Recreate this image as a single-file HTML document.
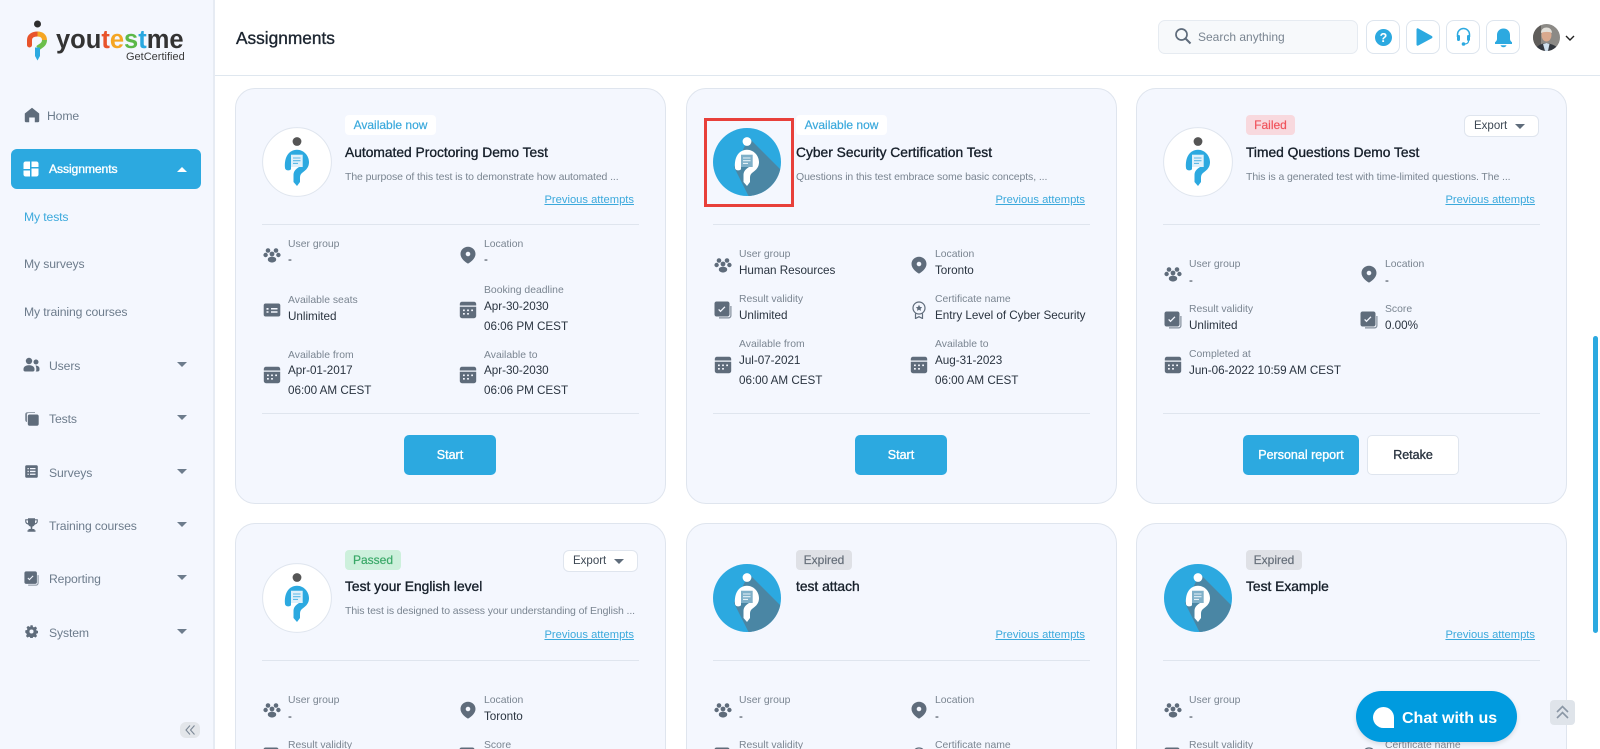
<!DOCTYPE html>
<html lang="en"><head><meta charset="utf-8"><title>Assignments</title>
<style>
*{box-sizing:border-box}
html,body{margin:0;padding:0;width:1600px;height:749px;overflow:hidden;background:#fff;font-family:"Liberation Sans",sans-serif}
#wrap{position:relative;width:1600px;height:749px;overflow:hidden;background:#fff}
#side{position:absolute;left:0;top:0;width:215px;height:749px;background:#f4f7fe;border-right:2px solid #e6ebf3}
#side .t{position:absolute;left:49px;font-size:12.2px;letter-spacing:-.12px;line-height:16px;color:#6d7c8c;white-space:nowrap}
#side svg.i{position:absolute;fill:#5f6c7b}
.car{position:absolute;left:177px;width:0;height:0;border-left:5px solid transparent;border-right:5px solid transparent;border-top:5px solid #6d7c8c}
#act{position:absolute;left:11px;top:149px;width:190px;height:40px;background:#2ca9e0;border-radius:6px}
#hdr{position:absolute;left:215px;top:0;width:1385px;height:76px;background:#fff;border-bottom:1.5px solid #dfe7ef}
.card{position:absolute;width:431px;height:416px;background:#f4f7fe;border:1.5px solid #dfe5ee;border-radius:20px}
.card.r2{height:226px;overflow:hidden;border-bottom:0;border-radius:20px 20px 0 0}
.card>*{position:absolute;white-space:nowrap}
.av{left:26px;top:38px;width:70px;height:70px}
.r2 .av{top:39px}
.bd{left:109px;top:26px;height:20px;line-height:20px;text-align:center;font-size:12px;border-radius:4px;-webkit-text-stroke:.2px}
.now{width:91px;background:#fff;color:#3ba9dc}
.fail{width:49px;background:#f8d9de;color:#f0545c}
.pass{width:56px;background:#cdf0dc;color:#3aa868}
.exp{width:56px;background:#dfe1e6;color:#666f7a}
.ti{left:109px;top:56px;font-size:13.8px;line-height:16px;color:#17202b;-webkit-text-stroke:.35px #17202b}
.r2 .ti{top:55px}
.de{left:109px;top:80px;font-size:10.5px;letter-spacing:-.1px;line-height:16px;color:#7a8591}
.r2 .de{top:79px}
.pa{right:31px;top:103px;font-size:11.2px;line-height:16px;color:#3ba9dc;text-decoration:underline}
.dv{left:26px;width:377px;height:1px;background:#dfe5ee}
.l{font-size:10.4px;line-height:16px;color:#7a8591;margin-top:2px}
.v{font-size:11.7px;letter-spacing:-.03px;line-height:16px;color:#2a3440;margin-top:1px}
.ex{left:327px;top:26px;width:75px;height:22px;background:#fff;border:1px solid #dfe5ee;border-radius:6px;font-size:11.5px;line-height:20px;color:#3d4854;padding-left:9px}
.ex:after{content:"";position:absolute;left:50px;top:8px;border-left:5px solid transparent;border-right:5px solid transparent;border-top:5px solid #5f6c7b}
.btn{top:346px;height:40px;border-radius:5px;background:#2ca9e0;color:#fff;font-size:12.5px;-webkit-text-stroke:.35px #fff;line-height:40px;text-align:center}
.btn.w{background:#fff;color:#2a3440;-webkit-text-stroke:.35px #2a3440;border:1px solid #dfe5ee;line-height:38px}
.ic{width:18px;height:18px;fill:#5f6c7b;margin-top:1px}
.hb{position:absolute;top:20px;width:34px;height:34px;border:1px solid #dde5ee;border-radius:8px;background:#fff}
.hb svg{position:absolute;left:0;top:0;width:32px;height:32px;fill:#2ca9e0}
</style></head><body>
<div id="wrap">
<svg width="0" height="0" style="position:absolute">
<defs>
<clipPath id="cc"><circle cx="35" cy="35" r="34"/></clipPath>
<symbol id="fig-w" viewBox="0 0 70 70">
<circle cx="35" cy="35" r="34.4" fill="#fff" stroke="#dfe5ee" stroke-width="1"/>
<circle cx="35" cy="14.5" r="4.4" fill="#555"/>
<path d="M23 41C22 30 27 22.700 35 22.700C42 22.700 47 29 47 35C47 42 42 44 39.500 46.500C38.300 47.700 38 49 38 52V55L35 59L31.500 55V48C31.500 44 34 42 37 40L40 38V28H29V42C28.500 44 23.500 44 23 41Z" fill="#2ca9e0"/>
<path d="M29 27.700h11.700V40H29z" fill="#dff0fa"/>
<path d="M31 31h7.500M31 33.700h7.500M31 36.400h5" stroke="#5cb9e6" stroke-width="1.100"/>
</symbol>
<symbol id="fig-b" viewBox="0 0 70 70">
<circle cx="35" cy="35" r="34" fill="#2ca9e0"/>
<path d="M37 11L80 54V80H42L22 40z" fill="#4a86a4" clip-path="url(#cc)"/>
<circle cx="35" cy="14.500" r="4.400" fill="#fff"/>
<path d="M23 41C22 30 27 22.700 35 22.700C42 22.700 47 29 47 35C47 42 42 44 39.500 46.500C38.300 47.700 38 49 38 52V55L35 59L31.500 55V48C31.500 44 34 42 37 40L40 38V28H29V42C28.500 44 23.500 44 23 41Z" fill="#fff"/>
<path d="M29 27.700h11.700V40H29z" fill="#7fb0c9"/>
<path d="M31 31h7.500M31 33.700h7.500M31 36.400h5" stroke="#e4f1f8" stroke-width="1.100"/>
</symbol>
<symbol id="grp" viewBox="0 0 18 18"><circle cx="5" cy="4.500" r="2.300"/><circle cx="13" cy="4.500" r="2.300"/><circle cx="2.600" cy="9" r="2.200"/><circle cx="15.400" cy="9" r="2.200"/><circle cx="9" cy="8" r="2.400"/><path d="M4.800 13.500C4.800 11.500 7 10.800 9 10.800s4.200.7 4.200 2.700c0 1.800-2 3-4.200 3s-4.200-1.200-4.200-3z"/></symbol>
<symbol id="pin" viewBox="0 0 18 18"><path fill-rule="evenodd" d="M9 .8C4.800.8 1.500 4 1.500 8c0 4.800 5.500 8.600 7.500 9.600 2-1 7.500-4.800 7.500-9.600C16.500 4 13.200.8 9 .8zM9 5.700a2.300 2.300 0 1 1 0 4.600 2.300 2.300 0 0 1 0-4.600z"/></symbol>
<symbol id="cal" viewBox="0 0 18 18"><path fill-rule="evenodd" d="M3 .8h12c1.200 0 2.200 1 2.200 2.200v1.500H.8V3C.8 1.800 1.800.8 3 .8zM.8 5.800h16.400V15c0 1.200-1 2.200-2.200 2.200H3C1.800 17.200.8 16.200.8 15zM4 8.500v1.600h1.800V8.500zm4.100 0v1.600h1.800V8.500zm4.100 0v1.600H14V8.500zM4 12v1.600h1.800V12zm4.100 0v1.600h1.800V12z"/></symbol>
<symbol id="idc" viewBox="0 0 18 18"><path fill-rule="evenodd" d="M2.500 2.500h13c1 0 1.800.8 1.800 1.800v9.400c0 1-.8 1.800-1.800 1.800h-13c-1 0-1.800-.8-1.800-1.800V4.300c0-1 .8-1.800 1.800-1.800zM3.500 7v1.700h2V7zm0 3.200v1.500h2v-1.500zM8 7v1.500h6.500V7zm0 3.200v1.500h6.500v-1.500z"/></symbol>
<symbol id="val" viewBox="0 0 18 18"><path d="M17.500 5v9.500c0 1.700-1.300 3-3 3H5v-1.200h9.500c1 0 1.800-.8 1.800-1.800V5z" opacity=".75"/><path fill-rule="evenodd" d="M2.500.5h11c1.100 0 2 .9 2 2v11c0 1.100-.9 2-2 2h-11c-1.100 0-2-.9-2-2v-11c0-1.100.9-2 2-2zM5.100 8l-.9.9 2.300 2.300 4.900-4.900-.9-.9-4 4z"/></symbol>
<symbol id="crt" viewBox="0 0 18 18"><circle cx="9" cy="7" r="6" fill="none" stroke="#5f6c7b" stroke-width="1.200"/><path d="M9 3.800l1 2.100 2.200.3-1.600 1.500.4 2.200-2-1.100-2 1.100.4-2.200-1.600-1.500 2.200-.3z"/><path d="M5.500 12.500v5l3.500-1.800 3.500 1.800v-5" fill="none" stroke="#5f6c7b" stroke-width="1.200"/></symbol>
</defs>
</svg>

<div id="side">
<svg style="position:absolute;left:25px;top:18px" width="28" height="46" viewBox="0 0 28 46">
<circle cx="12.500" cy="6" r="3.500" fill="#2d2d2d"/>
<path d="M4.500 27V22C4.500 18 8 16 12.500 16" fill="none" stroke="#e8532b" stroke-width="5" stroke-linecap="round"/>
<path d="M12.500 16C17 16 19.500 18.500 19.500 22" fill="none" stroke="#f5a623" stroke-width="5"/>
<path d="M19.500 22C19.500 27 15 28 13 30" fill="none" stroke="#6cbf4b" stroke-width="5"/>
<path d="M10 29.500h5V38l-2.500 4.500L10 38z" fill="#2ca9e0"/>
</svg>
<div style="position:absolute;left:56px;top:24px;font-size:25.500px;font-weight:bold;line-height:32px;color:#333;white-space:nowrap">you<span style="color:#e8532b">t</span><span style="color:#f5a623">e</span><span style="color:#5cb848">s</span><span style="color:#29a8e0">t</span>me</div>
<div style="position:absolute;left:126px;top:50px;font-size:11px;line-height:14px;color:#3a3a3a;white-space:nowrap">GetCertified</div>

<svg class="i" style="left:24px;top:107px" width="16" height="16" viewBox="0 0 16 16"><path d="M8 .8L.8 6.500V14c0 .7.5 1.200 1.200 1.200h3.200V10.500h5.600v4.700H14c.7 0 1.200-.5 1.200-1.200V6.500z"/></svg>
<div class="t" style="top:108px;left:47px">Home</div>

<div id="act"></div>
<svg style="position:absolute;left:23px;top:161px" width="16" height="16" viewBox="0 0 16 16" fill="#fff"><path d="M2.500.5H7V8H.5V2.500C.5 1.400 1.400.5 2.500.5zM8.500.5h5c1.100 0 2 .9 2 2V6h-7zM8.500 7.500h7v6c0 1.100-.9 2-2 2h-5zM.5 9.500H7v6H2.500c-1.100 0-2-.9-2-2z"/></svg>
<div class="t" style="top:161px;color:#fff;-webkit-text-stroke:.35px #fff">Assignments</div>
<div class="car" style="top:167px;border-top:0;border-bottom:5px solid #fff"></div>

<div class="t" style="left:24px;top:209px;color:#3ba9dc">My tests</div>
<div class="t" style="left:24px;top:256px">My surveys</div>
<div class="t" style="left:24px;top:304px">My training courses</div>

<svg class="i" style="left:23px;top:357px" width="17" height="16" viewBox="0 0 17 16"><circle cx="6" cy="4" r="3.200"/><circle cx="13" cy="5" r="2.500"/><path d="M.5 12c0-2.500 2.500-3.800 5.500-3.800S11.500 9.500 11.500 12v1c0 .8-.7 1.500-1.500 1.500H2c-.8 0-1.500-.7-1.500-1.500z"/><path d="M12.500 8.500c2.300 0 4 1.200 4 3v1.200c0 1-.7 1.800-1.800 1.800h-2c.4-.5.600-1 .600-1.500V12c0-1.400-.3-2.500-.8-3.500z"/></svg>
<div class="t" style="top:358px">Users</div><div class="car" style="top:362px"></div>

<svg class="i" style="left:24px;top:411px" width="15" height="15" viewBox="0 0 15 15"><path d="M5.500 3.500h7.500c1 0 1.700.7 1.700 1.700V13c0 1-.7 1.700-1.700 1.700H5.500c-1 0-1.700-.7-1.700-1.700V5.200c0-1 .7-1.700 1.700-1.700z"/><path d="M3 11V3.500C3 2.500 3.500 2 4.500 2H11V1.200H3.500C2 1.200 1.200 2 1.200 3.500V9C1.200 10 2 11 3 11z" opacity=".8"/></svg>
<div class="t" style="top:411px">Tests</div><div class="car" style="top:415px"></div>

<svg class="i" style="left:25px;top:465px" width="13" height="13" viewBox="0 0 13 13"><path fill-rule="evenodd" d="M1.500.2h10c.7 0 1.300.6 1.300 1.300v10c0 .7-.6 1.300-1.300 1.300h-10c-.7 0-1.300-.6-1.300-1.300v-10C.2.800.8.200 1.500.200zM2.500 3v1.300h1.300V3zm2.500 0v1.300h5.500V3zM2.500 5.800v1.300h1.300V5.800zm2.500 0v1.300h5.500V5.800zM2.500 8.600v1.300h1.300V8.600zm2.500 0v1.300h5.500V8.600z"/></svg>
<div class="t" style="top:465px">Surveys</div><div class="car" style="top:469px"></div>

<svg class="i" style="left:25px;top:518px" width="13" height="14" viewBox="0 0 13 14"><path d="M3 .3h7v1h2.800v2c0 1.800-1.300 3-3 3.300C9.200 7.800 8.300 8.400 7.300 8.600V11h2.200v1.200h1v1.500h-8v-1.500h1V11h2.200V8.600C4.700 8.400 3.800 7.800 3.200 6.600 1.500 6.300.2 5.100.2 3.300v-2H3zM1.300 2.400v.9c0 1 .7 1.700 1.700 2V2.400zm10.400 0H10v2.900c1-.3 1.700-1 1.700-2z"/></svg>
<div class="t" style="top:518px">Training courses</div><div class="car" style="top:522px"></div>

<svg class="i" style="left:24px;top:571px" width="15" height="15" viewBox="0 0 18 18"><use href="#val"/></svg>
<div class="t" style="top:571px">Reporting</div><div class="car" style="top:575px"></div>

<svg class="i" style="left:25px;top:625px" width="13" height="13" viewBox="0 0 14 14"><path fill-rule="evenodd" d="M5.800.3h2.400l.4 1.800 1.100.5 1.600-1 1.700 1.700-1 1.600.5 1.100 1.800.4v2.400l-1.800.4-.5 1.100 1 1.600-1.700 1.700-1.600-1-1.100.5-.4 1.800H5.800l-.4-1.800-1.100-.5-1.600 1-1.700-1.700 1-1.600-.5-1.100L.3 8.200V5.800l1.800-.4.5-1.100-1-1.600 1.700-1.700 1.600 1 1.100-.5zM7 4.800a2.200 2.200 0 1 0 0 4.400 2.200 2.200 0 0 0 0-4.400z"/></svg>
<div class="t" style="top:625px">System</div><div class="car" style="top:629px"></div>

<div style="position:absolute;left:180px;top:722px;width:20px;height:16px;background:#e3e6ea;border-radius:6px"></div>
<svg style="position:absolute;left:180px;top:722px" width="20" height="16" viewBox="0 0 20 16" fill="none" stroke="#7c8896" stroke-width="1.100"><path d="M10 3.500L6 8l4 4.500M14.500 3.500L10.500 8l4 4.500"/></svg>
</div>

<div id="hdr">
<div style="position:absolute;left:21px;top:28px;font-size:17.300px;line-height:20px;color:#1c2530;-webkit-text-stroke:.35px #1c2530">Assignments</div>
<div style="position:absolute;left:943px;top:20px;width:200px;height:34px;background:#f7f9fb;border:1px solid #e6ebf1;border-radius:7px"></div>
<svg style="position:absolute;left:959px;top:27px" width="18" height="18" viewBox="0 0 18 18" fill="none" stroke="#5f6c7b" stroke-width="1.700"><circle cx="7.500" cy="7.500" r="5.500"/><path d="M11.500 11.500L16.500 16.500" stroke-width="2"/></svg>
<div style="position:absolute;left:983px;top:29px;font-size:12px;line-height:16px;color:#7a8591">Search anything</div>

<div class="hb" style="left:1151px"><svg viewBox="0 0 32 32"><circle cx="16.500" cy="16.500" r="8.500"/><text x="16.500" y="21" text-anchor="middle" font-family="Liberation Sans" font-size="12.500" font-weight="bold" fill="#fff">?</text></svg></div>
<div class="hb" style="left:1191px"><svg viewBox="0 0 32 32"><path d="M9.500 8.500c0-1 1-1.500 1.800-1l13.500 7.500c.9.500.9 1.700 0 2.200L11.300 24.500c-.8.500-1.800 0-1.800-1z"/></svg></div>
<div class="hb" style="left:1231px"><svg viewBox="0 0 32 32"><path d="M10.500 16v-2.500a6 6 0 0 1 12 0V16" fill="none" stroke="#2ca9e0" stroke-width="1.500"/><rect x="10" y="14" width="3" height="6" rx="1.200"/><rect x="20" y="14" width="3" height="6" rx="1.200"/><path d="M21.500 20c0 2-2 3-4 3" fill="none" stroke="#2ca9e0" stroke-width="1.200"/><circle cx="16.500" cy="23" r="1.800"/></svg></div>
<div class="hb" style="left:1271px"><svg viewBox="0 0 32 32"><path d="M16.500 7.500c-4 0-6.500 3-6.500 6.500v4c0 1.500-1 2.500-2 3.300V23h17v-1.700c-1-.8-2-1.800-2-3.300v-4c0-3.500-2.500-6.500-6.500-6.500z"/><path d="M13.500 24.200h6c-.5 1.300-1.600 2-3 2s-2.500-.7-3-2z"/></svg></div>

<svg style="position:absolute;left:1318px;top:24px" width="27" height="27" viewBox="0 0 27 27">
<defs><clipPath id="ac"><circle cx="13.500" cy="13.500" r="13.500"/></clipPath></defs>
<g clip-path="url(#ac)"><rect width="27" height="27" fill="#8c8a86"/><path d="M0 0h8v27H0z" fill="#5f5d5a"/><path d="M2 27c1-5 5-7 11-8 6 1 12 3 13 8z" fill="#33383f"/><path d="M10 20l3.500-1 3 1-1.500 7h-3z" fill="#cfe0ee"/><ellipse cx="13.500" cy="11" rx="5" ry="6.500" fill="#d9a98e"/><path d="M8 9c0-4 3-5.500 5.500-5.500S19 5 19 9c-2-1.500-8-1.500-11 0z" fill="#e3e0da"/></g></svg>
<svg style="position:absolute;left:1349px;top:34px" width="12" height="8" viewBox="0 0 12 8" fill="none" stroke="#222" stroke-width="1.400"><path d="M2 2l4 4 4-4"/></svg>
</div>

<!-- card 1 -->
<div class="card" style="left:235px;top:88px">
<svg class="av"><use href="#fig-w"/></svg>
<div class="bd now">Available now</div>
<div class="ti">Automated Proctoring Demo Test</div>
<div class="de">The purpose of this test is to demonstrate how automated ...</div>
<div class="pa">Previous attempts</div>
<div class="dv" style="top:135px"></div>
<svg class="ic" style="left:27px;top:156px"><use href="#grp"/></svg>
<div class="l" style="left:52px;top:146px">User group</div><div class="v" style="left:52px;top:162px">-</div>
<svg class="ic" style="left:223px;top:156px"><use href="#pin"/></svg>
<div class="l" style="left:248px;top:146px">Location</div><div class="v" style="left:248px;top:162px">-</div>
<svg class="ic" style="left:27px;top:211px"><use href="#idc"/></svg>
<div class="l" style="left:52px;top:202px">Available seats</div><div class="v" style="left:52px;top:219px">Unlimited</div>
<svg class="ic" style="left:223px;top:211px"><use href="#cal"/></svg>
<div class="l" style="left:248px;top:192px">Booking deadline</div><div class="v" style="left:248px;top:209px">Apr-30-2030</div><div class="v" style="left:248px;top:229px">06:06 PM CEST</div>
<svg class="ic" style="left:27px;top:276px"><use href="#cal"/></svg>
<div class="l" style="left:52px;top:257px">Available from</div><div class="v" style="left:52px;top:273px">Apr-01-2017</div><div class="v" style="left:52px;top:293px">06:00 AM CEST</div>
<svg class="ic" style="left:223px;top:276px"><use href="#cal"/></svg>
<div class="l" style="left:248px;top:257px">Available to</div><div class="v" style="left:248px;top:273px">Apr-30-2030</div><div class="v" style="left:248px;top:293px">06:06 PM CEST</div>
<div class="dv" style="top:324px"></div>
<div class="btn" style="left:168px;width:92px">Start</div>
</div>

<!-- card 2 -->
<div class="card" style="left:686px;top:88px">
<svg class="av" style="left:25px"><use href="#fig-b"/></svg>
<div style="left:17px;top:29px;width:90px;height:89px;border:3px solid #e8403a"></div>
<div class="bd now">Available now</div>
<div class="ti">Cyber Security Certification Test</div>
<div class="de">Questions in this test embrace some basic concepts, ...</div>
<div class="pa">Previous attempts</div>
<div class="dv" style="top:135px"></div>
<svg class="ic" style="left:27px;top:166px"><use href="#grp"/></svg>
<div class="l" style="left:52px;top:156px">User group</div><div class="v" style="left:52px;top:173px">Human Resources</div>
<svg class="ic" style="left:223px;top:166px"><use href="#pin"/></svg>
<div class="l" style="left:248px;top:156px">Location</div><div class="v" style="left:248px;top:173px">Toronto</div>
<svg class="ic" style="left:27px;top:211px"><use href="#val"/></svg>
<div class="l" style="left:52px;top:201px">Result validity</div><div class="v" style="left:52px;top:218px">Unlimited</div>
<svg class="ic" style="left:223px;top:211px"><use href="#crt"/></svg>
<div class="l" style="left:248px;top:201px">Certificate name</div><div class="v" style="left:248px;top:218px">Entry Level of Cyber Security</div>
<svg class="ic" style="left:27px;top:266px"><use href="#cal"/></svg>
<div class="l" style="left:52px;top:246px">Available from</div><div class="v" style="left:52px;top:263px">Jul-07-2021</div><div class="v" style="left:52px;top:283px">06:00 AM CEST</div>
<svg class="ic" style="left:223px;top:266px"><use href="#cal"/></svg>
<div class="l" style="left:248px;top:246px">Available to</div><div class="v" style="left:248px;top:263px">Aug-31-2023</div><div class="v" style="left:248px;top:283px">06:00 AM CEST</div>
<div class="dv" style="top:324px"></div>
<div class="btn" style="left:168px;width:92px">Start</div>
</div>

<!-- card 3 -->
<div class="card" style="left:1136px;top:88px">
<svg class="av"><use href="#fig-w"/></svg>
<div class="bd fail">Failed</div>
<div class="ex">Export</div>
<div class="ti">Timed Questions Demo Test</div>
<div class="de">This is a generated test with time-limited questions. The ...</div>
<div class="pa">Previous attempts</div>
<div class="dv" style="top:135px"></div>
<svg class="ic" style="left:27px;top:175px"><use href="#grp"/></svg>
<div class="l" style="left:52px;top:166px">User group</div><div class="v" style="left:52px;top:183px">-</div>
<svg class="ic" style="left:223px;top:175px"><use href="#pin"/></svg>
<div class="l" style="left:248px;top:166px">Location</div><div class="v" style="left:248px;top:183px">-</div>
<svg class="ic" style="left:27px;top:221px"><use href="#val"/></svg>
<div class="l" style="left:52px;top:211px">Result validity</div><div class="v" style="left:52px;top:228px">Unlimited</div>
<svg class="ic" style="left:223px;top:221px"><use href="#val"/></svg>
<div class="l" style="left:248px;top:211px">Score</div><div class="v" style="left:248px;top:228px">0.00%</div>
<svg class="ic" style="left:27px;top:266px"><use href="#cal"/></svg>
<div class="l" style="left:52px;top:256px">Completed at</div><div class="v" style="left:52px;top:273px">Jun-06-2022 10:59 AM CEST</div>
<div class="dv" style="top:324px"></div>
<div class="btn" style="left:106px;width:116px">Personal report</div>
<div class="btn w" style="left:230px;width:92px">Retake</div>
</div>

<!-- card 4 -->
<div class="card r2" style="left:235px;top:523px">
<svg class="av"><use href="#fig-w"/></svg>
<div class="bd pass">Passed</div>
<div class="ex">Export</div>
<div class="ti">Test your English level</div>
<div class="de">This test is designed to assess your understanding of English ...</div>
<div class="pa">Previous attempts</div>
<div class="dv" style="top:136px"></div>
<svg class="ic" style="left:27px;top:176px"><use href="#grp"/></svg>
<div class="l" style="left:52px;top:167px">User group</div><div class="v" style="left:52px;top:184px">-</div>
<svg class="ic" style="left:223px;top:176px"><use href="#pin"/></svg>
<div class="l" style="left:248px;top:167px">Location</div><div class="v" style="left:248px;top:184px">Toronto</div>
<svg class="ic" style="left:27px;top:222px"><use href="#val"/></svg>
<div class="l" style="left:52px;top:212px">Result validity</div>
<svg class="ic" style="left:223px;top:222px"><use href="#val"/></svg>
<div class="l" style="left:248px;top:212px">Score</div>
</div>

<!-- card 5 -->
<div class="card r2" style="left:686px;top:523px">
<svg class="av" style="left:25px"><use href="#fig-b"/></svg>
<div class="bd exp">Expired</div>
<div class="ti">test attach</div>
<div class="pa">Previous attempts</div>
<div class="dv" style="top:136px"></div>
<svg class="ic" style="left:27px;top:176px"><use href="#grp"/></svg>
<div class="l" style="left:52px;top:167px">User group</div><div class="v" style="left:52px;top:184px">-</div>
<svg class="ic" style="left:223px;top:176px"><use href="#pin"/></svg>
<div class="l" style="left:248px;top:167px">Location</div><div class="v" style="left:248px;top:184px">-</div>
<svg class="ic" style="left:27px;top:222px"><use href="#val"/></svg>
<div class="l" style="left:52px;top:212px">Result validity</div>
<svg class="ic" style="left:223px;top:222px"><use href="#crt"/></svg>
<div class="l" style="left:248px;top:212px">Certificate name</div>
</div>

<!-- card 6 -->
<div class="card r2" style="left:1136px;top:523px">
<svg class="av"><use href="#fig-b"/></svg>
<div class="bd exp">Expired</div>
<div class="ti">Test Example</div>
<div class="pa">Previous attempts</div>
<div class="dv" style="top:136px"></div>
<svg class="ic" style="left:27px;top:176px"><use href="#grp"/></svg>
<div class="l" style="left:52px;top:167px">User group</div><div class="v" style="left:52px;top:184px">-</div>
<svg class="ic" style="left:223px;top:176px"><use href="#pin"/></svg>
<div class="l" style="left:248px;top:167px">Location</div><div class="v" style="left:248px;top:184px">-</div>
<svg class="ic" style="left:27px;top:222px"><use href="#val"/></svg>
<div class="l" style="left:52px;top:212px">Result validity</div>
<svg class="ic" style="left:223px;top:222px"><use href="#crt"/></svg>
<div class="l" style="left:248px;top:212px">Certificate name</div>
</div>

<div style="position:absolute;left:1593px;top:336px;width:5px;height:297px;background:#2ca9e0;border-radius:3px"></div>

<div style="position:absolute;left:1356px;top:691px;width:161px;height:51px;background:#009bdf;border-radius:26px;box-shadow:0 2px 5px rgba(0,0,0,.12)"></div>
<div style="position:absolute;left:1373px;top:707px;width:21px;height:21px;background:#fff;border-radius:50% 50% 0 50%"></div>
<div style="position:absolute;left:1402px;top:708px;font-size:16px;font-weight:bold;line-height:22px;color:#fff;white-space:nowrap">Chat with us</div>

<div style="position:absolute;left:1550px;top:700px;width:25px;height:25px;background:#dfe4ea;border-radius:4px"></div>
<svg style="position:absolute;left:1550px;top:700px" width="25" height="25" viewBox="0 0 25 25" fill="none" stroke="#8a97a5" stroke-width="1.600"><path d="M7 12l5.500-5.500L18 12M7 18l5.500-5.500L18 18"/></svg>
</div>
</body></html>
